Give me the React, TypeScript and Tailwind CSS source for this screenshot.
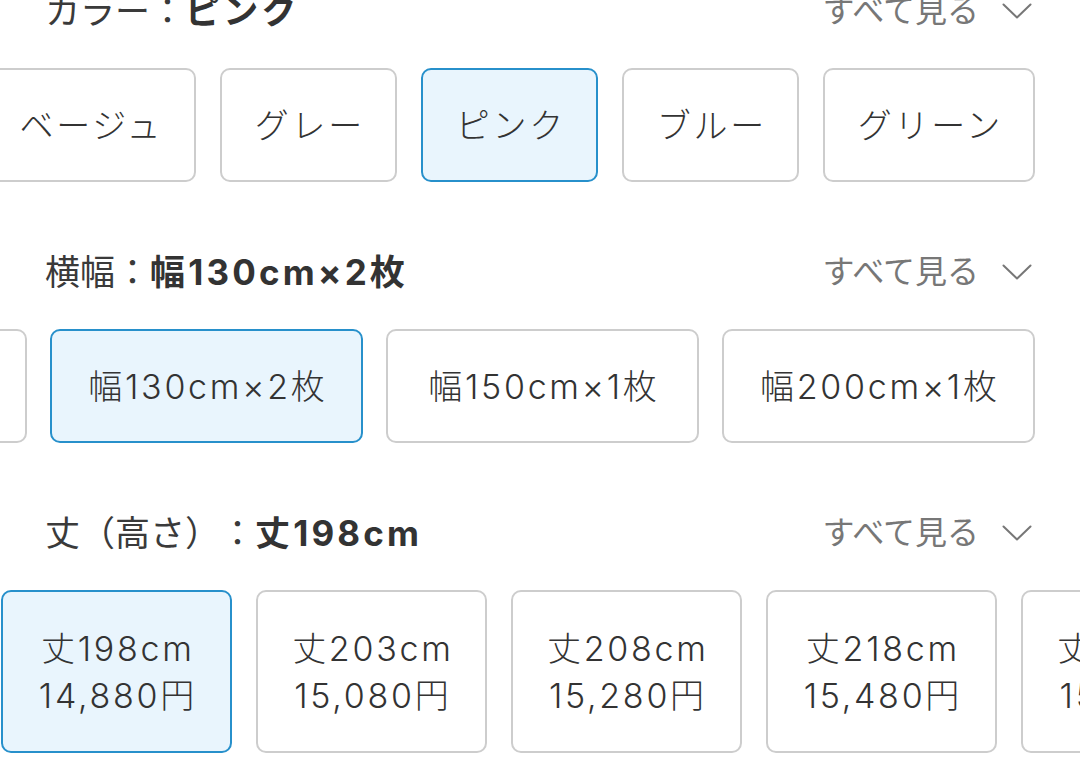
import React from 'react';

type Option = { label: string; price?: string; width: number; selected?: boolean };

type Section = {
  name: string;
  value: string;
  offset: string;
  gap: string;
  height: string;
  options: Option[];
};

const sections: Section[] = [
  {
    name: 'カラー',
    value: 'ピンク',
    offset: 'ml-[-16px]',
    gap: 'gap-[24px]',
    height: 'h-[114px]',
    options: [
      { label: 'ベージュ', width: 212 },
      { label: 'グレー', width: 177 },
      { label: 'ピンク', width: 177, selected: true },
      { label: 'ブルー', width: 177 },
      { label: 'グリーン', width: 212 },
    ],
  },
  {
    name: '横幅',
    value: '幅130cm×2枚',
    offset: 'ml-[-286px]',
    gap: 'gap-[23px]',
    height: 'h-[114px]',
    options: [
      { label: '幅100cm×2枚', width: 313 },
      { label: '幅130cm×2枚', width: 313, selected: true },
      { label: '幅150cm×1枚', width: 313 },
      { label: '幅200cm×1枚', width: 313 },
    ],
  },
  {
    name: '丈（高さ）',
    value: '丈198cm',
    offset: 'ml-[1px]',
    gap: 'gap-[24px]',
    height: 'h-[163px]',
    options: [
      { label: '丈198cm', price: '14,880円', width: 231, selected: true },
      { label: '丈203cm', price: '15,080円', width: 231 },
      { label: '丈208cm', price: '15,280円', width: 231 },
      { label: '丈218cm', price: '15,480円', width: 231 },
      { label: '丈228cm', price: '15,680円', width: 231 },
    ],
  },
];

function Chevron() {
  return (
    <svg width="30" height="16" viewBox="0 0 30 16" fill="none">
      <polyline points="1.5,1.5 15,14.5 28.5,1.5" stroke="#777" strokeWidth="2" strokeLinecap="round" strokeLinejoin="round" />
    </svg>
  );
}

function OptionButton({ opt, height }: { opt: Option; height: string }) {
  return (
    <button
      style={{ width: opt.width }}
      className={`${height} shrink-0 flex flex-col items-center justify-center rounded-[10px] border-2 text-[34px] font-light leading-[47px] tracking-[0.08em] text-[#333] ${
        opt.selected ? 'border-[#2790cb] bg-[#e9f5fd]' : 'border-[#cdcdcd] bg-white'
      }`}
    >
      <span className="pl-[0.08em]">{opt.label}</span>
      {opt.price && <span className="pl-[0.08em]">{opt.price}</span>}
    </button>
  );
}

export default function App() {
  return (
    <div className="w-[1080px] h-[778px] overflow-hidden bg-white text-[#333] font-['Inter','Noto_Sans_CJK_JP',sans-serif] [text-spacing-trim:space-all]">
      <div className="-mt-[11px] flex flex-col gap-[68px]">
        {sections.map((s) => (
          <section key={s.name} className="flex flex-col gap-[35px]">
            <div className="flex h-[44px] items-center justify-between pl-[45px] pr-[48px]">
              <h2 className="text-[35px] leading-[44px] text-[#3a3a3a]">
                {s.name}：<span className="font-bold tracking-[0.09em] text-[#333]">{s.value}</span>
              </h2>
              <button className="flex items-center gap-[23px] text-[32px] leading-[44px] text-[#777]">
                すべて見る
                <Chevron />
              </button>
            </div>
            <div className="overflow-hidden">
              <div className={`flex ${s.gap} ${s.offset}`}>
                {s.options.map((opt) => (
                  <OptionButton key={opt.label} opt={opt} height={s.height} />
                ))}
              </div>
            </div>
          </section>
        ))}
      </div>
    </div>
  );
}
